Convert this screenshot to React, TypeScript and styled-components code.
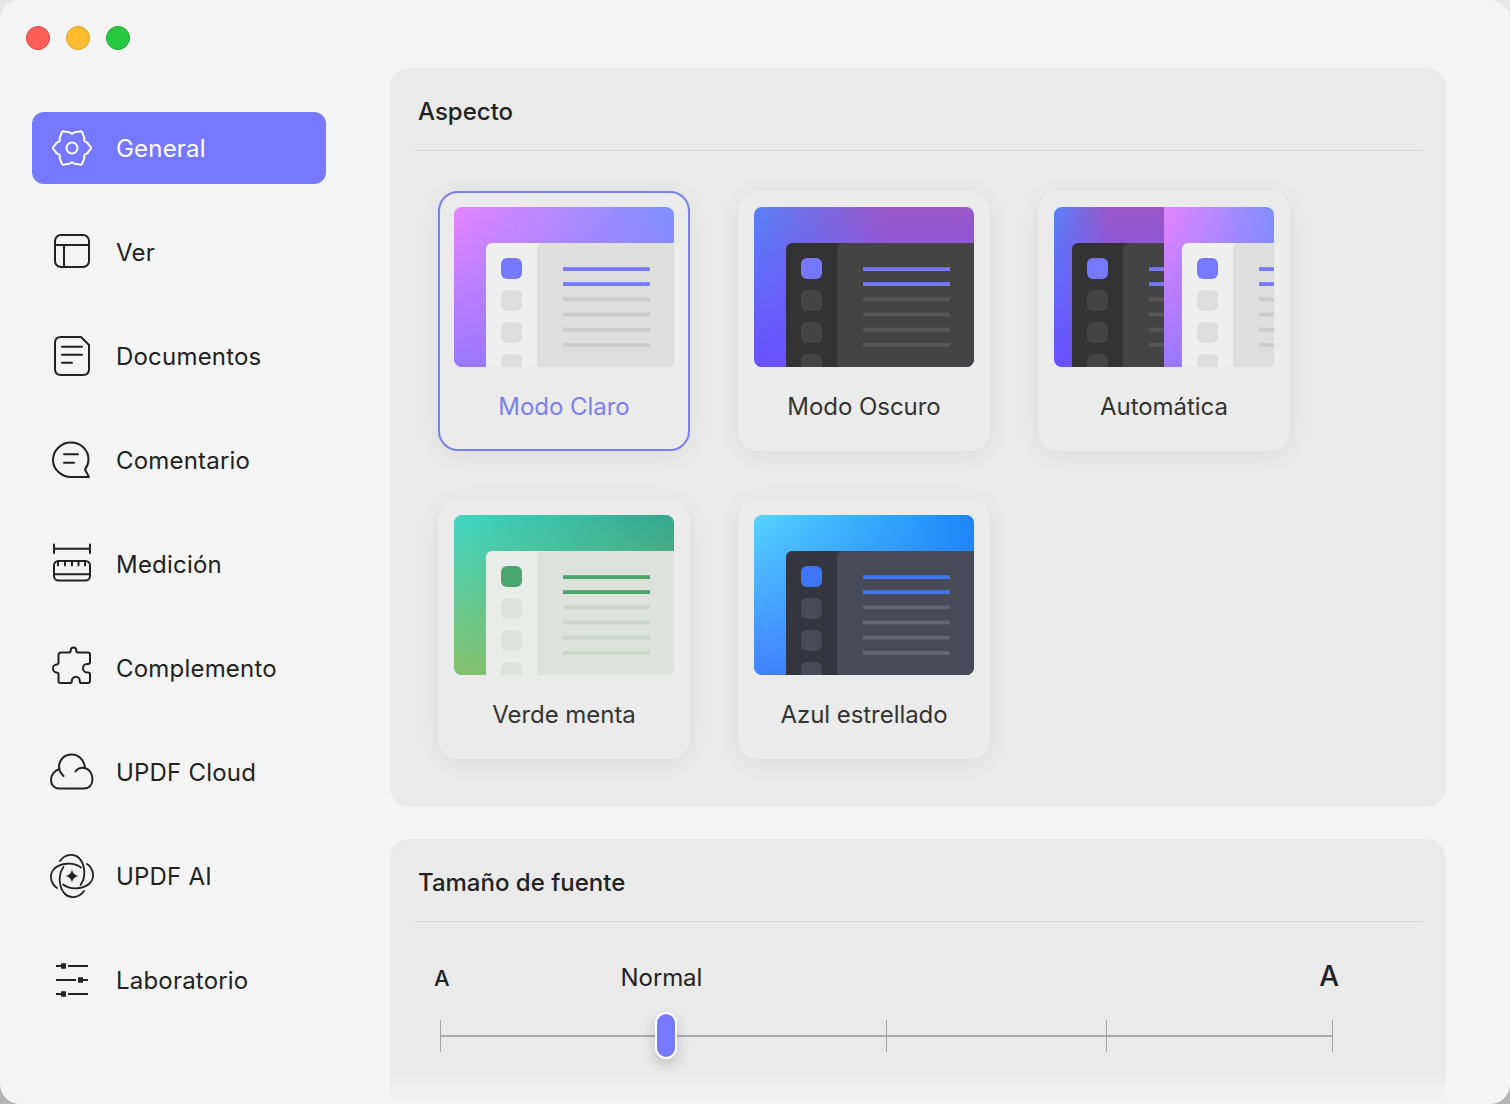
import React from 'react';
import styled, { createGlobalStyle } from 'styled-components';

const GlobalStyle = createGlobalStyle`
  html {
    background: linear-gradient(#e6e6e6, #e6e6e6 50%, #b4b4b4 50%, #b4b4b4);
  }
  html, body {
    margin: 0;
    padding: 0;
    overflow: hidden;
  }
  body {
    background: transparent;
  }
  * {
    box-sizing: border-box;
  }
`;

const ACCENT = '#7678ff';

type Scheme = {
  id: string;
  tl: string;
  tr: string;
  bl: string;
  span?: number;
  side: string;
  content: string;
  item: string;
  accent: string;
  muted: string;
};

const light: Scheme = { id: 'light', tl: '#e685ff', tr: '#7e90ff', bl: '#9a78ff', side: '#efefef', content: '#dedede', item: '#dedede', accent: ACCENT, muted: '#cbcbcb' };
const dark: Scheme = { id: 'dark', tl: '#5a80f8', tr: '#9a58c8', bl: '#6a50ff', span: 0.6, side: '#333333', content: '#444444', item: '#444444', accent: ACCENT, muted: '#565656' };
const mint: Scheme = { id: 'mint', tl: '#40d6c4', tr: '#35a58c', bl: '#84c06c', side: '#e9ece9', content: '#dde2dc', item: '#dde2dc', accent: '#4aa56c', muted: '#c9d6c9' };
const blue: Scheme = { id: 'blue', tl: '#55d5ff', tr: '#1a85f8', bl: '#4080ff', side: '#33363f', content: '#484b57', item: '#484b57', accent: '#3f76f8', muted: '#636571' };

const Gradient = ({ s }: { s: Scheme }) => (
  <>
    <linearGradient id={`${s.id}-h`} x1="0" y1="0" x2={s.span ?? 1} y2="0">
      <stop offset="0" stopColor={s.tl} />
      <stop offset="1" stopColor={s.tr} />
    </linearGradient>
    <linearGradient id={`${s.id}-v`} x1="0" y1="0" x2="0" y2="1">
      <stop offset="0" stopColor={s.bl} stopOpacity="0" />
      <stop offset="1" stopColor={s.bl} />
    </linearGradient>
  </>
);

const Scene = ({ s, x, width, shift }: { s: Scheme; x: number; width: number; shift: number }) => {
  const clipId = `${s.id}-clip-${x}`;
  return (
    <g clipPath={`url(#${clipId})`}>
      <defs>
        <clipPath id={clipId}>
          <rect x={x} y="0" width={width} height="160" />
        </clipPath>
      </defs>
      <rect x={x} y="0" width={width} height="160" fill={`url(#${s.id}-h)`} />
      <rect x={x} y="0" width={width} height="160" fill={`url(#${s.id}-v)`} />
      <rect x={32 + shift} y="36" width="240" height="140" rx="6" fill={s.side} />
      <rect x={83 + shift} y="36" width="240" height="140" rx="6" fill={s.content} />
      <rect x={47 + shift} y="51" width="21" height="21" rx="6" fill={s.accent} />
      {[83, 115, 147].map((y) => (
        <rect key={y} x={47 + shift} y={y} width="21" height="21" rx="6" fill={s.item} />
      ))}
      {[60.2, 75.2, 90.4, 105.6, 120.8, 136].map((y, i) => (
        <rect key={y} x={109 + shift} y={y} width="87" height="3.8" fill={i < 2 ? s.accent : s.muted} />
      ))}
    </g>
  );
};

const ThemePreview = ({ schemes }: { schemes: Scheme[] }) => (
  <Preview viewBox="0 0 220 160" width="220" height="160">
    <defs>
      {schemes.map((s) => (
        <Gradient key={s.id} s={s} />
      ))}
    </defs>
    {schemes.length === 1 ? (
      <Scene s={schemes[0]} x={0} width={220} shift={0} />
    ) : (
      <>
        <Scene s={schemes[0]} x={0} width={110} shift={-14} />
        <Scene s={schemes[1]} x={110} width={110} shift={96} />
      </>
    )}
  </Preview>
);

const Icon = ({ children }: { children: React.ReactNode }) => (
  <svg
    width="48"
    height="48"
    viewBox="0 0 48 48"
    fill="none"
    stroke="currentColor"
    strokeWidth="2"
    strokeLinecap="round"
    strokeLinejoin="round"
  >
    {children}
  </svg>
);

// wavy outline of the cog, six teeth
const gearPath = Array.from({ length: 120 }, (_, i) => {
  const a = (i / 120) * Math.PI * 2;
  const r = 16.6 + 2 * Math.cos(6 * a) + 0.35 * Math.cos(18 * a);
  return `${i === 0 ? 'M' : 'L'}${(24 + r * Math.cos(a)).toFixed(2)} ${(24 + r * Math.sin(a)).toFixed(2)}`;
}).join('') + 'z';

const GearIcon = () => (
  <Icon>
    <circle cx="24" cy="24" r="5.5" />
    <path d={gearPath} />
  </Icon>
);

const ViewIcon = () => (
  <Icon>
    <rect x="7" y="7" width="34" height="32" rx="6" />
    <path d="M7 17h34M16 17v22" />
  </Icon>
);

const DocumentIcon = () => (
  <Icon>
    <path d="M13 5h20l8 8v24c0 4-2 6-6 6H13c-4 0-6-2-6-6V11c0-4 2-6 6-6z" />
    <path d="M14 14.700h20M14 22.700h20M14 30.700h10" />
  </Icon>
);

const CommentIcon = () => (
  <Icon>
    <path d="M41 41H23C13.500 41 5 33.500 5 24S13 6.500 23 6.500c10 0 17.500 7.500 17.500 17 0 3.500-1 6.500-3.500 10z" />
    <path d="M16 18.300h14M16 26.700h10" />
  </Icon>
);

const RulerIcon = () => (
  <Icon>
    <path d="M6 4.500v8.500M42 4.500v8.500M6 8.700h36" />
    <rect x="6" y="21" width="36" height="19.500" rx="4.500" />
    <path d="M6 34.300h36M10 21v4.500M17 21v4.500M24 21v4.500M30.500 21v4.500M37 21v4.500" />
  </Icon>
);

const PuzzleIcon = () => (
  <Icon>
    <path d="M10.500 11c0-1.700.8-2.500 2.500-2.500h7.500c1.500 0 2.200-.5 2.200-1.800 0-2 .8-3.200 2.800-3.200S28.300 4.700 28.300 6.700c0 1.300.7 1.800 2.200 1.800H40c1.400 0 2 .7 2 2V18c0 1.500-.8 2-2 2h-1c-2.500 0-4 2-4 4.200s1.500 4.200 4 4.200h1c1.200 0 2 .5 2 2V37c0 1.400-.6 2-2 2h-6.500c-1.200 0-1.700-.5-1.700-1.800 0-2.500-1.800-4.500-4-4.500s-4 2-4 4.500c0 1.300-.5 1.800-1.700 1.800H12.500c-1.400 0-2-.6-2-2v-6.500c0-1.500-.8-2-2-2C6.300 28.500 5 26.500 5 24.500s1.300-4 3.500-4c1.200 0 2-.5 2-2z" />
  </Icon>
);

const CloudIcon = () => (
  <Icon>
    <path d="M15.500 28C12.500 25 11 22 11 19 11 11.500 16.500 6.500 23.500 6.500S36.500 12 37 20" />
    <path d="M27.500 23.500C29.500 21 32 19.800 34.500 19.800 40.500 19.800 44.500 25 44.500 31S41 40.500 36 40.500H11C6 40.500 3 36.500 3 32 3 27 6.500 22.500 11.500 21" />
  </Icon>
);

const AiIcon = () => (
  <Icon>
    {[0, 90, 180, 270].map((deg) => (
      <path key={deg} transform={`rotate(${deg} 24 24)`} strokeWidth="1.8" d="M12 9C16 3 25 .5 31 6 37 12 38.500 25 32.500 33" />
    ))}
    <path d="M24 17.500Q25 23 30.500 24 25 25 24 30.500 23 25 17.500 24 23 23 24 17.500z" fill="currentColor" stroke="none" />
  </Icon>
);

const SlidersIcon = () => (
  <Icon>
    <g strokeLinecap="butt">
      <path d="M8 10h5M20 10h20M8 24h20M35 24h5M8 38h5M20 38h20" />
    </g>
    <path d="M13 7.200h5v5.600h-5zM30 21.200h5v5.600h-5zM13 35.200h5v5.600h-5z" fill="currentColor" stroke="none" />
  </Icon>
);

const navItems = [
  { label: 'General', icon: <GearIcon /> },
  { label: 'Ver', icon: <ViewIcon /> },
  { label: 'Documentos', icon: <DocumentIcon /> },
  { label: 'Comentario', icon: <CommentIcon /> },
  { label: 'Medición', icon: <RulerIcon /> },
  { label: 'Complemento', icon: <PuzzleIcon /> },
  { label: 'UPDF Cloud', icon: <CloudIcon /> },
  { label: 'UPDF AI', icon: <AiIcon /> },
  { label: 'Laboratorio', icon: <SlidersIcon /> },
];

const themes = [
  { label: 'Modo Claro', schemes: [light], selected: true },
  { label: 'Modo Oscuro', schemes: [dark] },
  { label: 'Automática', schemes: [{ ...dark, id: 'auto-dark', span: 0.5 }, { ...light, id: 'auto-light' }] },
  { label: 'Verde menta', schemes: [mint] },
  { label: 'Azul estrellado', schemes: [blue] },
];

export default function App() {
  return (
    <>
      <GlobalStyle />
      <Window>
        <Sidebar>
          <TrafficLights>
            <Light $color="#ff5f57" $edge="#e0443e" />
            <Light $color="#febc2e" $edge="#dea123" />
            <Light $color="#28c840" $edge="#1aab29" />
          </TrafficLights>
          <Nav>
            {navItems.map((item, i) => (
              <NavItem key={item.label} $active={i === 0}>
                <NavIcon>{item.icon}</NavIcon>
                {item.label}
              </NavItem>
            ))}
          </Nav>
        </Sidebar>
        <Main>
          <Panel $height={739}>
            <PanelTitle>Aspecto</PanelTitle>
            <ThemeGrid>
              {themes.map((t) => (
                <ThemeCard key={t.label} $selected={t.selected}>
                  <ThemePreview schemes={t.schemes} />
                  <ThemeLabel $selected={t.selected}>{t.label}</ThemeLabel>
                </ThemeCard>
              ))}
            </ThemeGrid>
          </Panel>
          <Panel>
            <PanelTitle>Tamaño de fuente</PanelTitle>
            <SizeLabels>
              <SmallA>A</SmallA>
              <CurrentSize>Normal</CurrentSize>
              <LargeA>A</LargeA>
            </SizeLabels>
            <Track>
              {[0, 1, 2, 3, 4].map((i) => (
                <Tick key={i} $hidden={i === 1} />
              ))}
              <Thumb />
            </Track>
          </Panel>
          <BottomFade />
        </Main>
      </Window>
    </>
  );
}

const Window = styled.div`
  position: relative;
  display: flex;
  width: 1510px;
  height: 1104px;
  overflow: hidden;
  border-radius: 20px;
  background: #f4f4f4;
  font-family: Inter, 'Liberation Sans', sans-serif;
  color: #222222;
`;

const Sidebar = styled.aside`
  flex: 0 0 390px;
  padding: 26px 0 0 32px;
`;

const TrafficLights = styled.div`
  display: flex;
  gap: 16px;
  margin: 0 0 62px -6px;
`;

const Light = styled.span<{ $color: string; $edge: string }>`
  width: 24px;
  height: 24px;
  border-radius: 50%;
  background: ${(p) => p.$color};
  border: 1px solid ${(p) => p.$edge};
`;

const Nav = styled.nav`
  display: flex;
  flex-direction: column;
  gap: 32px;
  width: 294px;
`;

const NavItem = styled.div<{ $active?: boolean }>`
  display: flex;
  align-items: center;
  gap: 20px;
  height: 72px;
  padding-left: 16px;
  border-radius: 12px;
  font-size: 24px;
  letter-spacing: 0.2px;
  background: ${(p) => (p.$active ? ACCENT : 'transparent')};
  color: ${(p) => (p.$active ? '#ffffff' : '#222222')};
`;

const NavIcon = styled.span`
  display: flex;
  width: 48px;
  height: 48px;
`;

const Main = styled.main`
  position: relative;
  display: flex;
  flex-direction: column;
  gap: 32px;
  width: 1056px;
  padding-top: 68px;
`;

const Panel = styled.section<{ $height?: number }>`
  flex: none;
  height: ${(p) => (p.$height ? `${p.$height}px` : 'auto')};
  padding: 0 24px;
  border-radius: 20px;
  background: #eaeaea;
`;

const PanelTitle = styled.h2`
  display: flex;
  align-items: center;
  height: 83px;
  margin: 0;
  padding: 4px 0 0 4px;
  border-bottom: 1px solid #d4d4d4;
  font-size: 24px;
  font-weight: 500;
  color: #222222;
`;

const ThemeGrid = styled.div`
  display: grid;
  grid-template-columns: repeat(3, 252px);
  gap: 48px;
  padding: 40px 0 0 24px;
`;

const ThemeCard = styled.div<{ $selected?: boolean }>`
  display: flex;
  flex-direction: column;
  align-items: center;
  height: 260px;
  padding-top: 14px;
  border-radius: 20px;
  border: 2px solid ${(p) => (p.$selected ? '#7a80ea' : 'transparent')};
  background: #ebebeb;
  box-shadow: 0 4px 24px rgba(0, 0, 0, 0.06);
`;

const Preview = styled.svg`
  display: block;
  flex: none;
  border-radius: 8px;
`;

const ThemeLabel = styled.div<{ $selected?: boolean }>`
  margin-top: 25px;
  font-size: 24px;
  line-height: 30px;
  letter-spacing: -0.05px;
  color: ${(p) => (p.$selected ? '#7a80ea' : '#333333')};
`;

const SizeLabels = styled.div`
  display: flex;
  align-items: flex-end;
  height: 42px;
  margin-top: 29px;
  padding-left: 20px;
`;

const SmallA = styled.span`
  font-size: 22px;
  line-height: 30px;
  font-weight: 500;
`;

const CurrentSize = styled.span`
  margin-left: 171px;
  font-size: 24px;
  line-height: 30px;
  letter-spacing: -0.1px;
`;

const LargeA = styled.span`
  margin-left: auto;
  margin-right: 83px;
  font-size: 28px;
  line-height: 34px;
  font-weight: 500;
`;

const Track = styled.div`
  position: relative;
  display: grid;
  grid-template-columns: 226px 220px 220px 226px 1px;
  width: 893px;
  height: 32px;
  margin: 27px 0 80px 26px;
  background: linear-gradient(#ababab, #ababab) center / 100% 2px no-repeat;
`;

const Tick = styled.span<{ $hidden?: boolean }>`
  width: 1px;
  height: 32px;
  background: ${(p) => (p.$hidden ? 'transparent' : '#a3a3a3')};
`;

const Thumb = styled.span`
  position: absolute;
  left: 215px;
  top: -8px;
  width: 22px;
  height: 47px;
  border-radius: 11px;
  border: 2px solid #ffffff;
  background: ${ACCENT};
  box-shadow: 0 6px 14px rgba(0, 0, 0, 0.18);
`;

const BottomFade = styled.div`
  position: absolute;
  left: 0;
  right: 0;
  bottom: 0;
  height: 40px;
  background: linear-gradient(rgba(244, 244, 244, 0), #f4f4f4);
`;
